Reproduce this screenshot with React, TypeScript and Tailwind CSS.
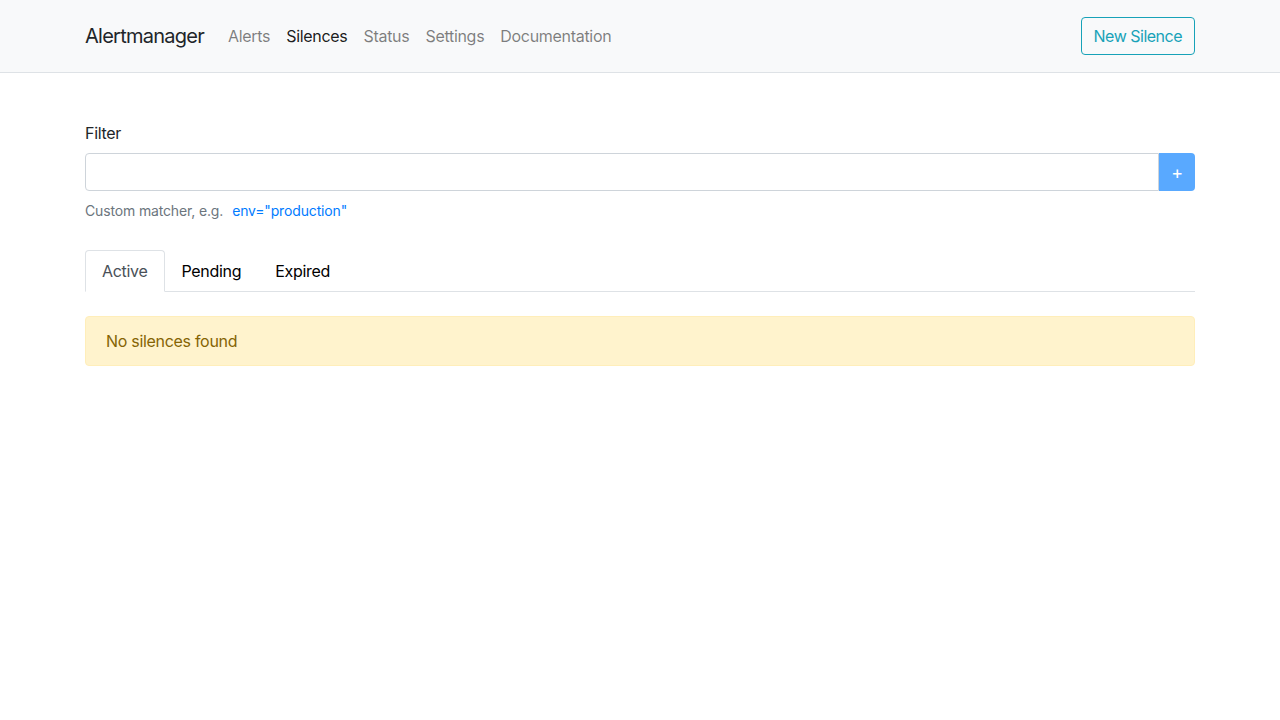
export default function App() {
  const font = { fontFamily: 'Inter, "Helvetica Neue", Arial, sans-serif' };
  return (
    <div className="min-h-screen bg-white text-[#212529] tracking-[-0.3px]" style={font}>
      <nav className="h-[73px] bg-[#f8f9fa] border-b border-[#dee2e6]">
        <div className="w-[1110px] mx-auto h-[72px] flex items-center">
          <span className="text-[20px] text-[#212529] mr-4 leading-[30px] tracking-[-0.75px]">Alertmanager</span>
          <div className="flex text-[16px] leading-6">
            <a className="px-2 text-[rgba(0,0,0,0.5)]">Alerts</a>
            <a className="px-2 text-[rgba(0,0,0,0.9)]">Silences</a>
            <a className="px-2 text-[rgba(0,0,0,0.5)]">Status</a>
            <a className="px-2 text-[rgba(0,0,0,0.5)]">Settings</a>
            <a className="px-2 text-[rgba(0,0,0,0.5)]">Documentation</a>
          </div>
          <button className="ml-auto h-[38px] px-3 border border-[#17a2b8] text-[#17a2b8] rounded-[4px] text-[16px] leading-6 tracking-[-0.5px]">
            New Silence
          </button>
        </div>
      </nav>
      <main className="w-[1110px] mx-auto pt-12">
        <label className="block text-[16px] leading-6 mb-2">Filter</label>
        <div className="flex h-[38px]">
          <input className="flex-1 border border-[#ced4da] rounded-l-[4px] outline-none px-3" />
          <button className="w-[36px] bg-[#59a9ff] text-white rounded-r-[4px] text-[18px] flex items-center justify-center">+</button>
        </div>
        <div className="mt-[10px] text-[14px] leading-[20px] text-[#6c757d] tracking-[-0.15px]">
          Custom matcher, e.g.<span className="ml-[9px] text-[#007bff]">env="production"</span>
        </div>
        <div className="mt-[29px] flex border-b border-[#dee2e6] h-[42px]">
          <div className="px-4 h-[42px] flex items-center border border-[#dee2e6] border-b-white -mb-px bg-white rounded-t-[4px] text-[#495057] text-[16px]">Active</div>
          <div className="px-4 h-[42px] flex items-center border border-transparent text-[16px] text-black">Pending</div>
          <div className="px-4 h-[42px] flex items-center border border-transparent text-[16px] text-black">Expired</div>
        </div>
        <div className="mt-6 h-[50px] flex items-center px-5 bg-[#fff3cd] border border-[#ffeeba] rounded-[4px] text-[#856404] text-[16px]">
          No silences found
        </div>
      </main>
    </div>
  );
}
